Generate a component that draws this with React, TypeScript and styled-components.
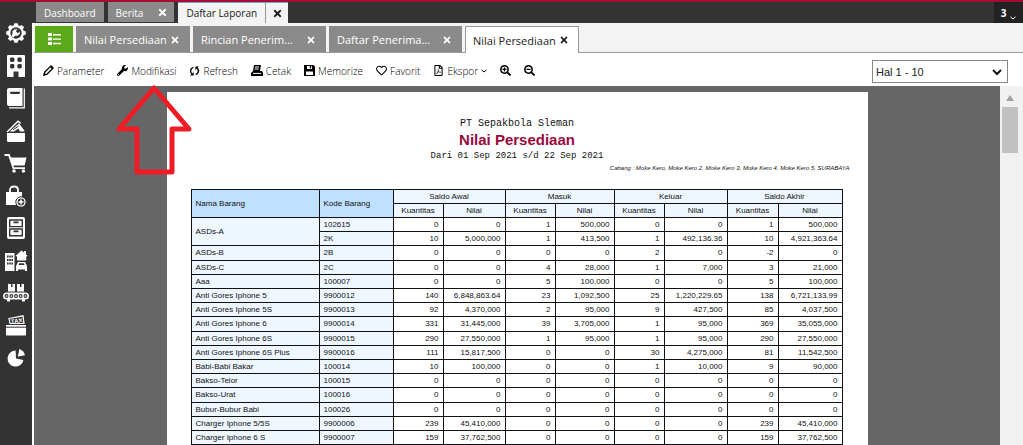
import React from "react";
import styled, { createGlobalStyle, css } from "styled-components";
import {
  FaWrench,
  FaRegHeart,
  FaRegFilePdf,
  FaSearchPlus,
  FaSearchMinus,
  FaTimes,
} from "react-icons/fa";

const uiFont = `"Open Sans", "Noto Sans", sans-serif`;
const arial = `"Liberation Sans", Arial, sans-serif`;

const GlobalStyle = createGlobalStyle`
  *, *::before, *::after { box-sizing: border-box; }
  body { margin: 0; background: #666; font-family: ${uiFont}; color: #222; }
  button { font: inherit; color: inherit; background: none; border: 0; padding: 0; margin: 0; cursor: pointer; white-space: nowrap; }
  a { color: inherit; text-decoration: none; }
  svg { display: block; flex: none; }
`;

const Shell = styled.div`
  display: flex;
  height: 100vh;
  overflow: hidden;
  border-top: 2px solid #a50d34;
  background: #333;
`;

const Rail = styled.nav`
  flex: none;
  width: 32px;
  padding-top: 19px;
  display: flex;
  flex-direction: column;
  align-items: center;
  gap: 8px;
  background: #333;
`;

const RailLink = styled.a`
  display: flex;
  align-items: center;
  justify-content: center;
  width: 28px;
  height: 24px;
  color: #fff;
  &:nth-child(even) { height: 25px; }
`;

const Main = styled.main`
  flex: 1;
  min-width: 0;
  display: flex;
  flex-direction: column;
`;

const TopBar = styled.header`
  flex: none;
  height: 21px;
  display: flex;
  align-items: stretch;
  padding-left: 4px;
  gap: 4px;
  background: #333;
`;

const TopTab = styled.div<{ $active?: boolean }>`
  display: flex;
  align-items: center;
  font-size: 10px;
  line-height: 20px;
  color: ${(p) => (p.$active ? "#222" : "#fff")};
  background: ${(p) => (p.$active ? "#f3f3f3" : "#8a8a8a")};
  border-top: 1px solid ${(p) => (p.$active ? "#7aa0c0" : "#8a8a8a")};
  margin-bottom: ${(p) => (p.$active ? "0" : "1px")};
`;

const TopLabel = styled.button`
  padding: 0 8px;
`;

const TopClose = styled.button<{ $divided?: boolean }>`
  display: flex;
  align-items: center;
  justify-content: center;
  align-self: stretch;
  width: 23px;
  ${(p) => p.$divided && css`border-left: 1px solid #999;`}
`;

const Counter = styled.button`
  margin-left: auto;
  width: 29px;
  display: flex;
  align-items: flex-end;
  justify-content: center;
  gap: 4px;
  padding-bottom: 3px;
  background: #222;
  color: #fff;
  font-size: 10px;
  font-weight: 700;
  line-height: 14px;
`;

const Body = styled.div`
  flex: 1;
  min-height: 0;
  display: flex;
  flex-direction: column;
  border-left: 2px solid #fff;
  background: #f3f3f3;
`;

const SubTabs = styled.div`
  flex: none;
  height: 30px;
  display: flex;
  align-items: stretch;
  gap: 3px;
  padding: 3px 0 0 1px;
  border-bottom: 1px solid #999;
`;

const ListButton = styled.button`
  width: 38px;
  display: flex;
  align-items: center;
  justify-content: center;
  background: #5ba818;
  color: #fff;
`;

const SubTab = styled.div<{ $wide?: boolean; $active?: boolean }>`
  width: ${(p) => (p.$wide ? "133px" : "114px")};
  display: flex;
  align-items: center;
  justify-content: space-between;
  padding: 0 9px 0 7px;
  font-size: 11px;
  border: 1px solid ${(p) => (p.$active ? "#999" : "#8a8a8a")};
  border-bottom: 0;
  background: ${(p) => (p.$active ? "#fff" : "#8a8a8a")};
  color: ${(p) => (p.$active ? "#222" : "#fff")};
  margin-bottom: ${(p) => (p.$active ? "-1px" : "0")};
`;

const Toolbar = styled.div`
  flex: none;
  height: 33px;
  display: flex;
  align-items: center;
  justify-content: space-between;
  padding: 0 15px 0 9px;
  background: #fff;
`;

const Tools = styled.div`
  display: flex;
  align-items: center;
  gap: 13px;
  padding-top: 2px;
`;

const Tool = styled.button`
  display: flex;
  align-items: center;
  gap: 3px;
  font-size: 10px;
  line-height: 16px;
  font-weight: 300;
  color: #000;
`;

const SelectWrap = styled.label`
  position: relative;
  display: block;
  width: 136px;
  height: 23px;
  margin-top: 4px;
`;

const PageSelect = styled.select`
  appearance: none;
  display: block;
  width: 100%;
  height: 100%;
  padding: 0 3px;
  border: 1px solid #888;
  border-radius: 0;
  background: #fff;
  color: #222;
  font-family: ${arial};
  font-size: 11px;
`;

const SelectArrow = styled.svg`
  position: absolute;
  right: 6px;
  top: 9px;
  pointer-events: none;
`;

const Viewer = styled.section`
  flex: 1;
  min-height: 0;
  display: flex;
  margin-right: 3px;
  background: #666;
`;

const Canvas = styled.div`
  flex: 1;
  min-width: 0;
  overflow: hidden;
  padding-top: 6px;
`;

const Sheet = styled.article`
  width: 701px;
  margin: 0 auto;
  padding: 25px 24px 40px;
  background: #fff;
  color: #111;
`;

const Company = styled.p<{ $small?: boolean }>`
  margin: 0;
  font-family: "Liberation Mono", "Courier New", monospace;
  font-size: ${(p) => (p.$small ? "9px" : "10px")};
  line-height: 14px;
  text-align: center;
`;

const Title = styled.h1`
  margin: 0;
  font-family: ${arial};
  font-size: 15px;
  line-height: 18px;
  font-weight: 700;
  color: #990a3c;
  text-align: center;
`;

const Branches = styled.p`
  margin: 0 -6px 15px 0;
  font-family: ${arial};
  font-size: 6px;
  line-height: 11px;
  font-style: italic;
  text-align: right;
`;

const Report = styled.table`
  width: 652px;
  table-layout: fixed;
  border-collapse: collapse;
  font-family: ${arial};
  font-size: 8px;
  line-height: 10px;

  th, td {
    height: 14px;
    padding: 0 4px;
    border: 1px solid #111;
    font-weight: 400;
    white-space: nowrap;
  }
  tbody tr:nth-child(5n + 3) > * { height: 15px; }
`;

const MainHead = styled.th`
  background: #bfe0ff;
  text-align: left;
`;

const GroupHead = styled.th`
  background: #eef7ff;
`;

const Cell = styled.td<{ $key?: boolean }>`
  text-align: ${(p) => (p.$key ? "left" : "right")};
  background: ${(p) => (p.$key ? "#eef7ff" : "#fff")};
`;

const ScrollTrack = styled.div`
  flex: none;
  width: 20px;
  display: flex;
  flex-direction: column;
  align-items: center;
  gap: 6px;
  padding-top: 9px;
  background: #f1f1f1;
`;

const ScrollThumb = styled.div`
  width: 16px;
  height: 46px;
  background: #c1c1c1;
`;

const Pointer = styled.svg`
  position: absolute;
  left: 115px;
  top: 84px;
  pointer-events: none;
`;

const Svg = ({ children, w = 22, h = 22 }: { children: React.ReactNode; w?: number; h?: number }) => (
  <svg width={w} height={h} viewBox={`0 0 ${w} ${h}`} fill="currentColor" aria-hidden="true">
    {children}
  </svg>
);

const dark = "#333";

const GearIcon = () => (
  <Svg>
    {[0, 45, 90, 135, 180, 225, 270, 315].map((a) => (
      <path key={a} d="M8.6 4l.8-2.8h3.2l.8 2.8z" transform={`rotate(${a} 11 11)`} />
    ))}
    <circle cx="11" cy="11" r="6.8" fill="none" stroke="currentColor" strokeWidth="2.2" />
    <path
      d="M7.6 11.6L7.4 9.2L9.8 7.2L12.6 7.2L10.8 9.2L12.8 11.2L14.8 9.6L14.6 12.2L12.2 14L10.6 13.4L8.2 15.6L6.6 14Z"
    />
  </Svg>
);
const BuildingIcon = () => (
  <Svg h={24}>
    <path d="M2 2Q2 1 3 1H19Q20 1 20 2V23H13.5V17.5H8.5V23H2Z" />
    <g fill={dark}>
      <rect x="5" y="3.5" width="4.4" height="4.4" rx="1.4" />
      <rect x="12.4" y="3.5" width="4.4" height="4.4" rx="1.4" />
      <rect x="5" y="10" width="4.4" height="4.4" rx="1.4" />
      <rect x="12.4" y="10" width="4.4" height="4.4" rx="1.4" />
    </g>
  </Svg>
);
const BookIcon = () => (
  <Svg>
    <path d="M2 3Q2 1 4 1H17.5V19H4Q2 19 2 17Z" />
    <path d="M19.3 1.5V20.8H4" fill="none" stroke="currentColor" strokeWidth="1.2" />
    <path d="M6 5.8H14" stroke={dark} strokeWidth="2.2" strokeLinecap="round" />
  </Svg>
);
const WalletIcon = () => (
  <Svg>
    <path d="M2 13H20V20.5Q20 22 18.5 22H3.5Q2 22 2 20.5Z" />
    <path d="M2 12L13 1.2L15.6 3.4" fill="none" stroke="currentColor" strokeWidth="1.4" />
    <path d="M4.5 11.6L14 3.6L19 10L19.6 11.6H15L13.4 8.6L9 11.6Z" />
    <path d="M8 9.8L13.6 6" stroke={dark} strokeWidth="1" />
  </Svg>
);
const CartIcon = () => (
  <Svg w={24}>
    <path d="M.5 3H5L9.4 16.2H21" fill="none" stroke="currentColor" strokeWidth="1.8" />
    <path d="M6 5.5H22.5L20.6 13.5H8.6Z" />
    <circle cx="10" cy="19" r="1.8" />
    <circle cx="19.4" cy="19" r="1.8" />
  </Svg>
);
const BagIcon = () => (
  <Svg>
    <path d="M1 7H17V20H1Z" />
    <path d="M5 9V5Q5 1.5 9 1.5T13 5V9" fill="none" stroke="currentColor" strokeWidth="1.8" />
    <circle cx="16" cy="17" r="5.2" stroke={dark} strokeWidth="1" />
    <circle cx="16" cy="17" r="3.4" fill={dark} />
    <path d="M16 14.5V19.5M13.5 17H18.5" stroke="currentColor" strokeWidth="1.6" />
  </Svg>
);
const CabinetIcon = () => (
  <Svg>
    <rect x="2" y="0" width="18" height="22" rx="2" />
    <path d="M4.7 3H17.3V9.6H4.7ZM4.7 12H17.3V18.8H4.7Z" fill="none" stroke={dark} strokeWidth="1.4" />
    <path d="M8.5 5.4H13.5M8.5 14.4H13.5" stroke={dark} strokeWidth="1.8" />
  </Svg>
);
const AssetsIcon = () => (
  <Svg w={24}>
    <rect x="1" y="3" width="9.5" height="18" />
    <path d="M3 6.5H9M3 10H9M3 13.5H9" stroke={dark} strokeWidth="1.8" strokeDasharray="1.6 .6" />
    <path d="M11.4 6L17.5 .4L20 2.6V1H22V4.4L23.8 6L22.2 6.6V10.4H13V6.6Z" />
    <path d="M12 16L14 12H21L23 16V21H21V19.5H14V21H12Z" />
    <path d="M14.5 15L15.3 13.2H19.7L20.5 15Z" fill={dark} />
  </Svg>
);
const ConveyorIcon = () => (
  <Svg w={26}>
    <path d="M5 2H12V9.6H5ZM14 2H21V9.6H14Z" />
    <path d="M8 2V5H9.5V2M17 2V5H18.5V2" fill={dark} />
    <rect x="0" y="10.5" width="26" height="7" rx="3.5" />
    {[3.5, 8.3, 13, 17.7, 22.5].map((x) => (
      <circle key={x} cx={x} cy="14" r="1.4" fill="none" stroke={dark} strokeWidth="1.1" />
    ))}
    <path d="M4 17H7V19.5H4ZM19 17H22V19.5H19Z" />
  </Svg>
);
const TaxIcon = () => (
  <Svg>
    <path d="M1 10H21V20.5H1Z" />
    <path d="M1 12.2H21" stroke={dark} strokeWidth="1" />
    <path d="M4 3.5L18 .8L19 8.5H5Z" fill={dark} stroke="currentColor" strokeWidth="1.2" />
    <text x="6" y="8" fontSize="6" fontWeight="700" fontFamily="Liberation Sans" transform="rotate(-8 11 6)">
      TAX
    </text>
  </Svg>
);
const PieIcon = () => (
  <Svg>
    <path d="M10.6 3.6A8 8 0 1 0 18.4 13L11 11.4Z" />
    <path d="M12.8 9.6L14.4 2Q18.6 3.6 20 8.2Z" />
  </Svg>
);

const ListIcon = () => (
  <Svg w={13} h={12}>
    <path d="M0 0H4V3H0ZM0 4.5H4V7.5H0ZM0 9H4V12H0ZM5 1H13V2.4H5ZM5 5.4H13V6.8H5ZM5 9.8H13V11.2H5Z" />
  </Svg>
);
const PencilIcon = () => (
  <Svg w={11} h={11}>
    <path d="M.8 10.2L1.8 7L8 .9L10.1 3L4 9.2Z" fill="none" stroke="currentColor" strokeWidth="1.3" strokeLinejoin="round" />
    <path d="M.3 10.7L1.4 7.8L3.2 9.6ZM7 2L8.2 .6L10.4 2.8L9 4Z" />
  </Svg>
);
const RefreshIcon = () => (
  <Svg w={11} h={10}>
    <path d="M4.4 1.3A4 4 0 0 0 2.8 8M6.6 8.7A4 4 0 0 0 8.2 2" fill="none" stroke="currentColor" strokeWidth="1.4" />
    <path d="M1 9.5H4.6V6ZM10 .5H6.4V4Z" />
  </Svg>
);
const PrintIcon = () => (
  <Svg w={12} h={11}>
    <path d="M3 0H10L9 6H11L12 8V11H0V8L2 6Z" />
    <path d="M4 2H8M3.6 4H7.6M2 8.4H10" stroke="#fff" strokeWidth="1" />
  </Svg>
);
const DiskIcon = () => (
  <Svg w={11} h={11}>
    <path d="M0 0H9.4L11 1.6V11H0Z" />
    <path d="M3 1H8V4H3ZM2 6.4H9V10H2Z" fill="#fff" />
    <path d="M5.8 1H7.2V3.4H5.8Z" />
  </Svg>
);
const Chevron = () => (
  <Svg w={6} h={4}>
    <path d="M.5 .8L3 3L5.5 .8" fill="none" stroke="currentColor" strokeWidth="1" />
  </Svg>
);

const rail: [string, () => React.ReactElement][] = [
  ["Pengaturan", GearIcon],
  ["Perusahaan", BuildingIcon],
  ["Buku Besar", BookIcon],
  ["Kas & Bank", WalletIcon],
  ["Penjualan", CartIcon],
  ["Pembelian", BagIcon],
  ["Persediaan", CabinetIcon],
  ["Aset Tetap", AssetsIcon],
  ["Manufaktur", ConveyorIcon],
  ["Pajak", TaxIcon],
  ["Laporan", PieIcon],
];

type Item = { code: string; values: string[] };
const groups: { name: string; items: Item[] }[] = [
  {
    name: "ASDs-A",
    items: [
      { code: "102615", values: ["0", "0", "1", "500,000", "0", "0", "1", "500,000"] },
      { code: "2K", values: ["10", "5,000,000", "1", "413,500", "1", "492,136.36", "10", "4,921,363.64"] },
    ],
  },
  { name: "ASDs-B", items: [{ code: "2B", values: ["0", "0", "0", "0", "2", "0", "-2", "0"] }] },
  { name: "ASDs-C", items: [{ code: "2C", values: ["0", "0", "4", "28,000", "1", "7,000", "3", "21,000"] }] },
  { name: "Aaa", items: [{ code: "100007", values: ["0", "0", "5", "100,000", "0", "0", "5", "100,000"] }] },
  { name: "Anti Gores Iphone 5", items: [{ code: "9900012", values: ["140", "6,848,863.64", "23", "1,092,500", "25", "1,220,229.65", "138", "6,721,133.99"] }] },
  { name: "Anti Gores Iphone 5S", items: [{ code: "9900013", values: ["92", "4,370,000", "2", "95,000", "9", "427,500", "85", "4,037,500"] }] },
  { name: "Anti Gores Iphone 6", items: [{ code: "9900014", values: ["331", "31,445,000", "39", "3,705,000", "1", "95,000", "369", "35,055,000"] }] },
  { name: "Anti Gores Iphone 6S", items: [{ code: "9900015", values: ["290", "27,550,000", "1", "95,000", "1", "95,000", "290", "27,550,000"] }] },
  { name: "Anti Gores Iphone 6S Plus", items: [{ code: "9900016", values: ["111", "15,817,500", "0", "0", "30", "4,275,000", "81", "11,542,500"] }] },
  { name: "Babi-Babi Bakar", items: [{ code: "100014", values: ["10", "100,000", "0", "0", "1", "10,000", "9", "90,000"] }] },
  { name: "Bakso-Telor", items: [{ code: "100015", values: ["0", "0", "0", "0", "0", "0", "0", "0"] }] },
  { name: "Bakso-Urat", items: [{ code: "100016", values: ["0", "0", "0", "0", "0", "0", "0", "0"] }] },
  { name: "Bubur-Bubur Babi", items: [{ code: "100026", values: ["0", "0", "0", "0", "0", "0", "0", "0"] }] },
  { name: "Charger Iphone 5/5S", items: [{ code: "9900006", values: ["239", "45,410,000", "0", "0", "0", "0", "239", "45,410,000"] }] },
  { name: "Charger Iphone 6 S", items: [{ code: "9900007", values: ["159", "37,762,500", "0", "0", "0", "0", "159", "37,762,500"] }] },
];

const columns = [128, 74, 50, 62, 50, 59, 50, 63, 51, 64];
const measures = ["Saldo Awal", "Masuk", "Keluar", "Saldo Akhir"];

const subTabs = [
  { label: "Nilai Persediaan" },
  { label: "Rincian Penerim...", wide: true },
  { label: "Daftar Penerima...", wide: true },
  { label: "Nilai Persediaan", active: true },
];

export default function App() {
  return (
    <>
      <GlobalStyle />
      <Shell>
        <Rail aria-label="Menu">
          {rail.map(([name, Icon]) => (
            <RailLink key={name} href="#" aria-label={name}>
              <Icon />
            </RailLink>
          ))}
        </Rail>
        <Main>
          <TopBar>
            <TopTab>
              <TopLabel>Dashboard</TopLabel>
            </TopTab>
            <TopTab>
              <TopLabel>Berita</TopLabel>
              <TopClose aria-label="Tutup Berita"><FaTimes size={11} /></TopClose>
            </TopTab>
            <TopTab $active>
              <TopLabel>Daftar Laporan</TopLabel>
              <TopClose $divided aria-label="Tutup Daftar Laporan"><FaTimes size={11} /></TopClose>
            </TopTab>
            <Counter>3 <Chevron /></Counter>
          </TopBar>
          <Body>
            <SubTabs>
              <ListButton aria-label="Daftar"><ListIcon /></ListButton>
              {subTabs.map((t, i) => (
                <SubTab key={i} $wide={t.wide} $active={t.active}>
                  <button>{t.label}</button>
                  <button aria-label={`Tutup ${t.label}`}><FaTimes size={10} /></button>
                </SubTab>
              ))}
            </SubTabs>
            <Toolbar>
              <Tools>
                <Tool><PencilIcon />Parameter</Tool>
                <Tool><FaWrench size={11} />Modifikasi</Tool>
                <Tool><RefreshIcon />Refresh</Tool>
                <Tool><PrintIcon />Cetak</Tool>
                <Tool><DiskIcon />Memorize</Tool>
                <Tool><FaRegHeart size={11} />Favorit</Tool>
                <Tool><FaRegFilePdf size={11} />Ekspor <Chevron /></Tool>
                <Tool aria-label="Perbesar"><FaSearchPlus size={11} /></Tool>
                <Tool aria-label="Perkecil"><FaSearchMinus size={11} /></Tool>
              </Tools>
              <SelectWrap>
                <PageSelect aria-label="Halaman">
                  <option>Hal 1 - 10</option>
                </PageSelect>
                <SelectArrow width="10" height="7" viewBox="0 0 10 7">
                  <path d="M1 1L5 5L9 1" fill="none" stroke="#111" strokeWidth="2" />
                </SelectArrow>
              </SelectWrap>
            </Toolbar>
            <Viewer>
              <Canvas>
                <Sheet>
                  <Company>PT Sepakbola Sleman</Company>
                  <Title>Nilai Persediaan</Title>
                  <Company $small>Dari 01 Sep 2021 s/d 22 Sep 2021</Company>
                  <Branches>
                    Cabang : Moke Kero, Moke Kero 2, Moke Kero 3, Moke Kero 4, Moke Kero 5, SURABAYA
                  </Branches>
                  <Report>
                    <colgroup>
                      {columns.map((w, i) => (
                        <col key={i} width={w} />
                      ))}
                    </colgroup>
                    <thead>
                      <tr>
                        <MainHead rowSpan={2}>Nama Barang</MainHead>
                        <MainHead rowSpan={2}>Kode Barang</MainHead>
                        {measures.map((m) => (
                          <GroupHead key={m} colSpan={2}>{m}</GroupHead>
                        ))}
                      </tr>
                      <tr>
                        {measures.map((m) => (
                          <React.Fragment key={m}>
                            <GroupHead>Kuantitas</GroupHead>
                            <GroupHead>Nilai</GroupHead>
                          </React.Fragment>
                        ))}
                      </tr>
                    </thead>
                    <tbody>
                      {groups.flatMap((g) =>
                        g.items.map((item, i) => (
                          <tr key={item.code}>
                            {i === 0 && <Cell $key rowSpan={g.items.length}>{g.name}</Cell>}
                            <Cell $key>{item.code}</Cell>
                            {item.values.map((v, j) => (
                              <Cell key={j}>{v}</Cell>
                            ))}
                          </tr>
                        ))
                      )}
                    </tbody>
                  </Report>
                </Sheet>
              </Canvas>
              <ScrollTrack>
                <Svg w={8} h={6}><path d="M0 6L4 0L8 6Z" fill="#a3a3a3" /></Svg>
                <ScrollThumb />
              </ScrollTrack>
            </Viewer>
          </Body>
        </Main>
      </Shell>
      <Pointer width="80" height="92" viewBox="0 0 80 92" aria-hidden="true">
        <path d="M39 4L74 45H57V88H22V45H4Z" fill="none" stroke="#ee1c24" strokeWidth="5" strokeLinejoin="round" />
      </Pointer>
    </>
  );
}
